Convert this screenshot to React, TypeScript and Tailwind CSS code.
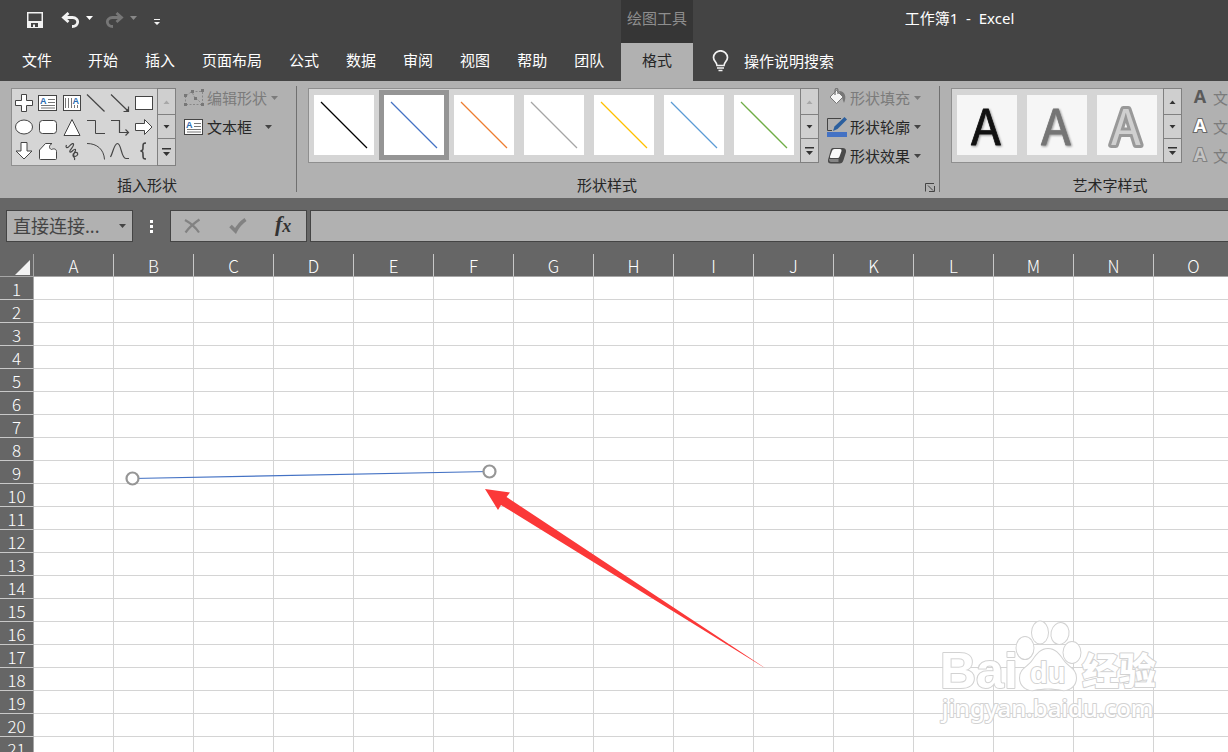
import React from "react";

const tabs = ["开始", "插入", "页面布局", "公式", "数据", "审阅", "视图", "帮助", "团队"];
const columns = "ABCDEFGHIJKLMNO".split("");
const rows = Array.from({ length: 21 }, (_, i) => i + 1);

const lineStyles = [
  { name: "黑色", color: "#000000" },
  { name: "蓝色", color: "#4472c4", selected: true },
  { name: "橙色", color: "#ed7d31" },
  { name: "灰色", color: "#a5a5a5" },
  { name: "金色", color: "#ffc000" },
  { name: "浅蓝", color: "#5b9bd5" },
  { name: "绿色", color: "#70ad47" },
];

function Caret({ className = "" }: { className?: string }) {
  return (
    <svg className={"shrink-0 " + className} width="7" height="4" viewBox="0 0 7 4" fill="currentColor" aria-hidden="true">
      <path d="M0 0H7L3.5 4Z" />
    </svg>
  );
}

function TextPage() {
  return (
    <>
      <rect x="2.5" y="4.5" width="18" height="15" fill="#fff" stroke="#444" />
      <path d="M12 8.5h7M12 11.5h7M5 14.5h14M5 17h14" stroke="#777" fill="none" />
      <text x="4" y="13" fontSize="9" fontWeight="700" fill="#2b6cb0" fontFamily="Liberation Sans, sans-serif">A</text>
    </>
  );
}

const shapes: { name: string; art: React.ReactNode }[] = [
  { name: "十字形", art: <path d="M9.5 3.5h5v6h6v5h-6v6h-5v-6h-6v-5h6z" fill="#fff" /> },
  { name: "文本框", art: <TextPage /> },
  {
    name: "竖排文本框",
    art: (
      <>
        <rect x="3.5" y="4.5" width="17" height="15" fill="#fff" />
        <path d="M5.500 7v10M8.500 7v10M11.500 7v10M14.500 14v3M17.500 14v3" stroke="#777" />
        <text x="12.500" y="13" fontSize="9" fontWeight="700" fill="#2b6cb0" stroke="none" fontFamily="Liberation Sans, sans-serif">A</text>
      </>
    ),
  },
  { name: "直线", art: <path d="M3 3.500 20.500 20.500" strokeWidth="1.200" /> },
  { name: "箭头", art: <path d="M3 3.500 20 20M20.500 15.500v5H15.500M18 20.500 20.500 18" strokeWidth="1.200" /> },
  { name: "矩形", art: <rect x="3.500" y="5.500" width="17" height="13" fill="#fff" /> },
  { name: "椭圆", art: <ellipse cx="12" cy="12" rx="8.500" ry="7" fill="#fff" /> },
  { name: "圆角矩形", art: <rect x="3.500" y="5.500" width="17" height="13" rx="3" fill="#fff" /> },
  { name: "三角形", art: <path d="M12 4.500 20 20.500H4z" fill="#fff" /> },
  { name: "肘形连接符", art: <path d="M3 5.500h8.500v13H21" /> },
  { name: "肘形箭头", art: <path d="M3 5.500h8.500v12H20M17.500 14.500 20.500 17.500 17.500 20.500" strokeWidth="1.200" /> },
  { name: "右箭头", art: <path d="M3.500 8.500h9v-4l7.500 7.500-7.500 7.500v-4h-9z" fill="#fff" /> },
  { name: "下箭头", art: <path d="M9 3.500h6v8.500h5L12 20 4 12h5z" fill="#fff" /> },
  { name: "任意多边形", art: <path d="M9.500 4.500h6.500c-3 1.500-3.500 5-.500 6 3-1.500 5 0 5 2v7q0 1-1 1h-15q-1 0-1-1V11z" fill="#fff" /> },
  {
    name: "自由曲线",
    art: <path d="M6.500 6C5 9 7.500 9.500 9.500 7c2-2.500 4.500-3.500 4-1-.500 3-5 5.500-3.500 7C11.500 14 14 9 15.500 10.500c1 1.500-3.500 5-1.500 6.500 2 1 4.500-1 3.500-3-1.500-1.500-5 0-4.500 2.500.500 2 2.500 2 1.500 4.500" strokeWidth="1.200" />,
  },
  { name: "弧形", art: <path d="M3 4.500c10 0 17 6 17.500 16" /> },
  { name: "曲线", art: <path d="M2.500 18C5 14 6 4.500 9.500 4.500c4 0 3.500 15 8.500 15h3" strokeWidth="1.200" /> },
  { name: "左大括号", art: <path d="M14 4c-3 0-3 1-3 4s0 3.500-2.500 4c2.500.5 2.500 1 2.500 4s0 4 3 4" strokeWidth="1.600" /> },
];

function ScrollButtons({ canGoUp = false, tall = false }: { canGoUp?: boolean; tall?: boolean }) {
  return (
    <div className="flex w-[19px] shrink-0 flex-col divide-y divide-[#808080] border border-[#808080] bg-[#cfcfcf] text-[#333]">
      <button aria-label="上一行" className={"flex h-[26px] items-center justify-center " + (canGoUp ? "" : "text-[#a8a8a8]")}>
        <svg width="7" height="4" viewBox="0 0 7 4" fill="currentColor"><path d="M.5 4H6.500L3.500 .5Z" /></svg>
      </button>
      <button aria-label="下一行" className="flex h-6 items-center justify-center">
        <svg width="7" height="4" viewBox="0 0 7 4" fill="currentColor"><path d="M.5 0H6.500L3.500 3.500Z" /></svg>
      </button>
      <button aria-label="其他" className={"flex items-center justify-center " + (tall ? "h-[26px]" : "h-[23px]")}>
        <svg width="9" height="8" viewBox="0 0 9 8" fill="currentColor"><path d="M0 0H9V1.500H0ZM1 4H8L4.500 8Z" /></svg>
      </button>
    </div>
  );
}

function Divider() {
  return <div className="mt-[5px] mb-[6px] w-px shrink-0 bg-[#707070]" />;
}

function CommandButton({ icon, label, muted = false, wide = false }: { icon: React.ReactNode; label: string; muted?: boolean; wide?: boolean }) {
  return (
    <button className={"flex h-[29px] items-center whitespace-nowrap " + (muted ? "text-[#7b7b7b]" : "text-[#262626]")}>
      <span className="mr-[3px] flex w-5 justify-center">{icon}</span>
      {label}
      <Caret className={wide ? "ml-[13px] text-[#444]" : muted ? "ml-1" : "ml-1 text-[#444]"} />
    </button>
  );
}

const editShapeIcon = (
  <svg width="20" height="20" viewBox="0 0 20 20" fill="#777">
    <path d="M8 3.500h9M18.500 4v12M2 16.500h16M1.500 8v9M7 4 2 8M11 10 8 4M12 10l6 6" stroke="#888" strokeDasharray="2 1.500" fill="none" />
    <path d="M7 2h3v3H7zM17 1h3v3h-3zM0 6h3v3H0zM10 9h3v3h-3zM0 15h3v3H0zM17 15h3v3h-3z" />
  </svg>
);
const textBoxIcon = (
  <svg width="20" height="18" viewBox="2 3 20 18"><TextPage /></svg>
);
const fillIcon = (
  <svg width="20" height="20" viewBox="0 0 20 20">
    <path d="M12 3c6 0 8 6 5 12-1.500-3-1.500-6-4-9z" fill="#777" />
    <path d="M9.500 2.500 3 9l6.500 6.500L16 9z" fill="#f6f6f6" stroke="#777" />
    <path d="M8 7V3c0-3.500 3-3.500 3 0v3" stroke="#777" strokeWidth="1.300" fill="none" />
  </svg>
);
const outlineIcon = (
  <svg width="20" height="20" viewBox="0 0 20 20">
    <path d="M14 1.500H.5v12H5" fill="none" stroke="#444" />
    <path d="M17.500 0 20 2.500 10.500 12 6 14l1.500-4.500z" fill="#2b5f9e" />
    <rect y="15" width="20" height="5" fill="#4472c4" />
  </svg>
);
const effectIcon = (
  <svg width="20" height="18" viewBox="0 0 20 18">
    <path d="M6 1h9.500q4 0 3.500 4L16.500 13q-1 3.500-4 3.500H4q-3.500 0-3-3.500L3.500 4Q4 1 6 1z" fill="#4a4a4a" />
    <path d="M7.500 2H13q2 0 1.500 2l-2 5.500q-.500 1.500-2 1.500H4q-1.500 0-1-1.500L5 4q.5-2 2.500-2z" fill="#fafafa" />
    <path d="M2 12h9.500v3H4q-2 0-2-3z" fill="#858585" />
  </svg>
);

function ShapeOverlay() {
  return (
    <svg className="pointer-events-none absolute left-0 top-0" width="1228" height="498" viewBox="0 254 1228 498">
      <path d="M132.500 478.500 489.500 471.500" stroke="#4472c4" strokeWidth="1.200" />
      <circle cx="132.500" cy="478.500" r="6" fill="#fff" stroke="#969696" strokeWidth="2.200" />
      <circle cx="489.500" cy="471.500" r="6" fill="#fff" stroke="#969696" strokeWidth="2.200" />
      <path d="M485 489 510 492.500 506.500 497 765 668 501 505 498 510Z" fill="#fb3838" />
      <g fill="#fff" stroke="#d2d2d2" strokeWidth="2" strokeLinejoin="round" paintOrder="stroke">
        <text x="940" y="688" fontSize="50" fontWeight="700" fontFamily="Liberation Sans, sans-serif">Bai</text>
        <path d="M1048 649c7 0 11 5 15 11 4 7 13 8 13 18 0 8-7 13-14 12-9-2-19-2-28 0-7 1-14-4-14-12 0-10 9-11 13-18 4-6 8-11 15-11z" />
        <ellipse cx="1025" cy="648" rx="8.500" ry="11" />
        <ellipse cx="1040" cy="632.500" rx="8" ry="11" />
        <ellipse cx="1060" cy="633.500" rx="8.500" ry="10.500" transform="rotate(12 1060 633.500)" />
        <ellipse cx="1072" cy="652.500" rx="8.500" ry="10.500" />
        <text x="1030" y="683" fontSize="29" fontWeight="700" fontFamily="Liberation Sans, sans-serif">du</text>
        <text x="1082" y="685" fontSize="37" fontWeight="900" fontFamily="Noto Sans CJK SC, sans-serif">经验</text>
        <text x="942" y="717" fontSize="24" fontWeight="500" fontFamily="Noto Sans, sans-serif">jingyan.baidu.com</text>
      </g>
    </svg>
  );
}

export default function App() {
  return (
    <div className="flex h-screen flex-col overflow-hidden bg-[#666] font-['Noto_Sans','Noto_Sans_CJK_SC',sans-serif] text-[15px] leading-5 text-white">
      <header className="shrink-0 bg-[#444]">
        <div className="flex h-[43px]">
          <div className="flex w-[621px] shrink-0 items-center pb-[3px] pl-[27px]">
            <button aria-label="保存">
              <svg width="16" height="16" viewBox="0 0 16 16">
                <path d="M0 0H16V16H0Z M1.500 1.500V9H14.500V1.500Z M4 11V15H6V12.500H8V15H11V11Z" fill="#f2f2f2" fillRule="evenodd" />
              </svg>
            </button>
            <button aria-label="撤消" className="ml-[18px]">
              <svg width="19" height="16" viewBox="0 0 19 16" fill="none" stroke="#f2f2f2" strokeWidth="2.800">
                <path d="M7.500 1 2.500 5.500 7.500 10M2.500 5.500H11.500C18.500 5.500 18.500 14.500 11 14.500" />
              </svg>
            </button>
            <button aria-label="撤消列表" className="ml-[6px] pb-1"><Caret /></button>
            <button aria-label="恢复" className="ml-3">
              <svg width="19" height="16" viewBox="0 0 19 16" fill="none" stroke="#777" strokeWidth="2.800">
                <path d="M11.500 1 16.500 5.500 11.500 10M16.500 5.500H7.500C.5 5.500.5 14.500 8 14.500" />
              </svg>
            </button>
            <button aria-label="恢复列表" className="ml-[6px] pb-1 text-[#888]"><Caret /></button>
            <button aria-label="自定义快速访问工具栏" className="ml-[17px] pt-1">
              <svg width="6" height="6" viewBox="0 0 6 6" fill="#f2f2f2"><path d="M0 0H6V1H0ZM0 3H6L3 6Z" /></svg>
            </button>
          </div>
          <div className="flex w-[72px] shrink-0 items-center justify-center bg-[#363636] pb-[7px] text-[#8e8e8e]">绘图工具</div>
          <h1 className="flex-1 whitespace-pre pt-2 pr-[2px] text-center">{"工作簿1  -  Excel"}</h1>
        </div>
        <div className="flex h-[38px]">
          <nav className="flex w-[621px] shrink-0 items-center gap-[27px] whitespace-nowrap pb-1 pl-[22px]">
            <button className="mr-[9px]">文件</button>
            {tabs.map((t) => (
              <button key={t}>{t}</button>
            ))}
          </nav>
          <button className="w-[72px] shrink-0 bg-[#b1b1b1] pb-1 text-[#262626]">格式</button>
          <button className="flex items-center pb-[2px] pl-[19px]">
            <svg width="17" height="22" viewBox="0 0 17 22" fill="none" stroke="#f2f2f2" strokeWidth="1.700">
              <path d="M5 15.500C5 12 1.500 11.500 1.500 7.500a7 6.700 0 0 1 14 0C15.500 11.500 12 12 12 15.500ZM5 18H12M6.500 20.500H10.500" />
            </svg>
            <span className="ml-[15px]">操作说明搜索</span>
          </button>
        </div>
      </header>

      <section className="flex h-[117px] shrink-0 overflow-hidden bg-[#b1b1b1] text-[#262626]">
        <div className="flex w-[296px] shrink-0 flex-col justify-between pl-[11px] pt-[2px] pb-px">
          <div className="flex gap-2">
            <div className="mt-[5px] flex">
              <div className="grid grid-cols-6 border border-r-0 border-[#8f8f8f] bg-[#d5d5d5] py-[2px] pr-px">
                {shapes.map((s) => (
                  <button key={s.name} aria-label={s.name} className="size-6">
                    <svg width="24" height="24" viewBox="0 0 24 24" fill="none" stroke={s.name === "文本框" ? "none" : "#444"}>{s.art}</svg>
                  </button>
                ))}
              </div>
              <ScrollButtons tall />
            </div>
            <div>
              <CommandButton icon={editShapeIcon} label="编辑形状" muted />
              <CommandButton icon={textBoxIcon} label="文本框" wide />
            </div>
          </div>
          <div className="-ml-[11px] h-6 pr-[2px] text-center leading-6">插入形状</div>
        </div>
        <Divider />
        <div className="flex w-[642px] shrink-0 flex-col justify-between pl-[11px] pt-[2px] pb-px">
          <div className="flex gap-2">
            <div className="mt-[5px] flex h-[75px]">
              <div className="flex border border-r-0 border-[#8f8f8f] bg-[#d5d5d5] pr-px pt-px">
                {lineStyles.map((s) => (
                  <button key={s.name} aria-label={s.name} className={"size-[70px] border-5 " + (s.selected ? "border-[#959595]" : "border-transparent")}>
                    <svg className="bg-white" width="60" height="60" viewBox="0 0 60 60">
                      <path d="M7 7 53 53" stroke={s.color} strokeWidth="1.300" />
                    </svg>
                  </button>
                ))}
              </div>
              <ScrollButtons />
            </div>
            <div>
              <CommandButton icon={fillIcon} label="形状填充" muted />
              <CommandButton icon={outlineIcon} label="形状轮廓" />
              <CommandButton icon={effectIcon} label="形状效果" />
            </div>
          </div>
          <div className="-ml-[11px] flex h-6 items-center">
            <span className="flex-1 pr-1 text-center">形状样式</span>
            <button aria-label="形状样式设置" className="flex w-[18px] pl-1 pt-1">
              <svg width="10" height="9" viewBox="0 0 10 9" fill="none" stroke="#444">
                <path d="M.5 8.500V.5H9M3 2.500 8 7.500M9.500 3V8.500H4" />
              </svg>
            </button>
          </div>
        </div>
        <Divider />
        <div className="flex w-[362px] shrink-0 flex-col justify-between pl-[11px] pt-[2px] pb-px">
          <div className="flex gap-2">
            <div className="mt-[5px] flex h-[75px]">
              <div className="flex border border-r-0 border-[#8f8f8f] bg-[#d5d5d5] pr-px pt-px">
                {["#111111", "#757575", "outline"].map((c) => (
                  <button key={c} aria-label="艺术字" className="size-[70px] border-5 border-transparent">
                    <svg className="overflow-visible bg-[#f6f6f6]" width="60" height="60" viewBox="0 0 60 60">
                      <g fontFamily="Noto Sans CJK SC, sans-serif" fontWeight="400" fontSize="49" textAnchor="middle">
                        {c === "outline" ? (
                          <text x="29" y="50" fill="#d0d0d0" stroke="#999" strokeWidth="6" strokeLinejoin="round" paintOrder="stroke">A</text>
                        ) : (
                          <text className="[filter:drop-shadow(1px_1px_1px_#0006)]" x="29" y="50" fill={c} stroke={c} strokeWidth="0.800" strokeLinejoin="round">A</text>
                        )}
                      </g>
                    </svg>
                  </button>
                ))}
              </div>
              <ScrollButtons canGoUp />
            </div>
            <div>
              {[
                { label: "文本填充", fill: "#5a5a5a", stroke: "none" },
                { label: "文本轮廓", fill: "#ffffff", stroke: "#666666" },
                { label: "文本效果", fill: "#c4c4c4", stroke: "#808080" },
              ].map((t) => (
                <CommandButton
                  key={t.label}
                  label={t.label}
                  muted
                  icon={
                    <svg className="overflow-visible" width="20" height="20" viewBox="0 0 20 20">
                      <text x="10" y="15" textAnchor="middle" fontFamily="Open Sans, sans-serif" fontWeight="700" fontSize="18" fill={t.fill} stroke={t.stroke} strokeWidth="2" paintOrder="stroke">A</text>
                    </svg>
                  }
                />
              ))}
            </div>
          </div>
          <div className="-ml-[11px] h-6 pr-[22px] text-center leading-6">艺术字样式</div>
        </div>
      </section>

      <section className="flex shrink-0 items-center py-3 pl-[6px] text-[#444]">
        <div className="flex h-8 w-[127px] shrink-0 items-center border border-[#444] bg-[#b1b1b1] pr-[6px]">
          <input aria-label="名称框" readOnly value="直接连接..." className="w-full min-w-0 bg-transparent pl-[6px] text-lg leading-6 outline-none" />
          <button aria-label="名称列表" className="flex"><Caret /></button>
        </div>
        <svg className="ml-[17px] shrink-0" width="3" height="13" viewBox="0 0 3 13" fill="#fff"><path d="M0 0H3V3H0ZM0 5H3V8H0ZM0 10H3V13H0Z" /></svg>
        <div className="ml-[17px] flex h-8 w-[137px] shrink-0 items-center gap-7 border border-[#444] bg-[#b1b1b1] pl-[13px]">
          <button aria-label="取消">
            <svg width="17" height="16" viewBox="0 0 17 16" fill="none" stroke="#828282" strokeWidth="2.200"><path d="M1 2Q10 7 15 14.500M15.500 1.500Q7 7 1.500 14.500" /></svg>
          </button>
          <button aria-label="输入">
            <svg width="18" height="16" viewBox="0 0 18 16" fill="none" stroke="#828282" strokeWidth="3.600"><path d="M1.500 8 6.500 13Q10 6 16.500 1.500" /></svg>
          </button>
          <button aria-label="插入函数" className="flex items-center pb-1 font-['Liberation_Serif',serif] text-[22px] font-bold italic leading-6 text-[#333]">
            f<span className="pt-1 text-lg leading-5">x</span>
          </button>
        </div>
        <input aria-label="编辑栏" className="ml-[3px] h-8 min-w-0 flex-1 border border-r-0 border-[#444] bg-[#b1b1b1] px-2 outline-none" />
      </section>

      <main className="relative min-h-0 flex-1 overflow-hidden bg-white">
        <table className="w-max border-separate border-spacing-0 font-['Noto_Sans_CJK_SC',sans-serif] text-[17px] leading-[21px]">
          <thead>
            <tr className="bg-[#666]">
              <th aria-label="全选" className="h-[23px] w-[34px] min-w-[34px] border-r border-b border-[#a6a6a6] p-0">
                <svg className="ml-[15px] mt-1" width="15" height="15" viewBox="0 0 15 15"><path d="M15 0V15H0Z" fill="#f2f2f2" /></svg>
              </th>
              {columns.map((c) => (
                <th key={c} scope="col" className="h-[23px] w-20 min-w-20 border-r border-b border-r-[#c8c8c8] border-b-[#a6a6a6] p-0 pt-px font-light leading-[21px]">{c}</th>
              ))}
            </tr>
          </thead>
          <tbody>
            {rows.map((r) => (
              <tr key={r}>
                <th scope="row" className="h-[23px] border-r border-b border-r-[#a6a6a6] border-b-[#c8c8c8] bg-[#666] p-0 pt-px font-light">{r}</th>
                {columns.map((c) => (
                  <td key={c} className="border-r border-b border-[#d4d4d4] p-0" />
                ))}
              </tr>
            ))}
          </tbody>
        </table>
        <ShapeOverlay />
      </main>
    </div>
  );
}
